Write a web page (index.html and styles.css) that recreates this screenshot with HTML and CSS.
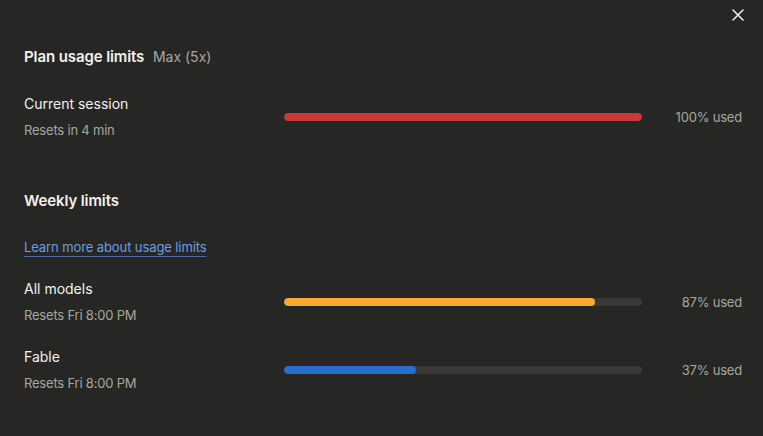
FILE: index.html
```html
<!DOCTYPE html>
<html lang="en">
<head>
    <meta charset="UTF-8">
    <meta name="viewport" content="width=device-width, initial-scale=1.0">
    <title>Usage limits</title>
    <link rel="stylesheet" href="styles.css">
</head>
<body>
    <div class="dialog">
        <button class="close" aria-label="Close">
            <svg width="12" height="12" viewBox="0 0 12 12">
                <path d="M1 1L11 11M11 1L1 11" stroke="#f2f1ec" stroke-width="1.5" stroke-linecap="round"/>
            </svg>
        </button>

        <h2 class="title">Plan usage limits <span class="plan">Max (5x)</span></h2>

        <div class="row session">
            <div class="info">
                <div class="name">Current session</div>
                <div class="reset">Resets in 4 min</div>
            </div>
            <div class="track"><div class="fill red" style="width: 100%"></div></div>
            <div class="used">100% used</div>
        </div>

        <h2 class="section">Weekly limits</h2>
        <a class="learn" href="#">Learn more about usage limits</a>

        <div class="row">
            <div class="info">
                <div class="name">All models</div>
                <div class="reset">Resets Fri 8:00 PM</div>
            </div>
            <div class="track"><div class="fill orange" style="width: 87%"></div></div>
            <div class="used">87% used</div>
        </div>

        <div class="row">
            <div class="info">
                <div class="name">Fable</div>
                <div class="reset">Resets Fri 8:00 PM</div>
            </div>
            <div class="track"><div class="fill blue" style="width: 37%"></div></div>
            <div class="used">37% used</div>
        </div>
    </div>
</body>
</html>
```

FILE: styles.css
```css
body {
    margin: 0;
    background-color: #262624;
    font-family: 'Inter', 'Noto Sans', sans-serif;
    color: #f2f1ec;
}

.dialog {
    position: relative;
    padding: 47px 21px 0 24px;
    display: flex;
    flex-direction: column;
}

.close {
    position: absolute;
    top: 9px;
    right: 19px;
    width: 12px;
    height: 12px;
    padding: 0;
    border: none;
    background: none;
    display: flex;
}

h2 {
    margin: 0;
    font-size: 15px;
    line-height: 20px;
    font-weight: 600;
    letter-spacing: -0.1px;
}

.plan {
    margin-left: 5px;
    font-size: 14px;
    font-weight: 400;
    letter-spacing: 0;
    color: #a8a69e;
}

.row {
    display: grid;
    grid-template-columns: 260px 1fr 100px;
    align-items: center;
    margin-top: 22px;
}
.session {
    margin-top: 27px;
}

.info {
    display: flex;
    flex-direction: column;
    gap: 6px;
}
.name {
    font-size: 14px;
    line-height: 20px;
}
.reset {
    font-size: 13px;
    line-height: 20px;
    letter-spacing: -0.2px;
    color: #a8a69e;
}

.track {
    height: 8px;
    border-radius: 4px;
    background-color: #3a3a38;
    overflow: hidden;
}
.fill {
    height: 100%;
    border-radius: 4px;
}
.red { background-color: #c9393b; }
.orange { background-color: #f8a931; }
.blue { background-color: #2b6bcb; }

.used {
    text-align: right;
    font-size: 13px;
    letter-spacing: -0.2px;
    color: #a8a69e;
}

.section {
    margin-top: 51px;
}

.learn {
    align-self: flex-start;
    margin-top: 26px;
    font-size: 13px;
    line-height: 20px;
    letter-spacing: -0.1px;
    color: #6b9de0;
    text-decoration: underline;
    text-decoration-color: #4a6d9c;
    text-underline-offset: 4px;
}
.learn + .row {
    margin-top: 22px;
}
```
